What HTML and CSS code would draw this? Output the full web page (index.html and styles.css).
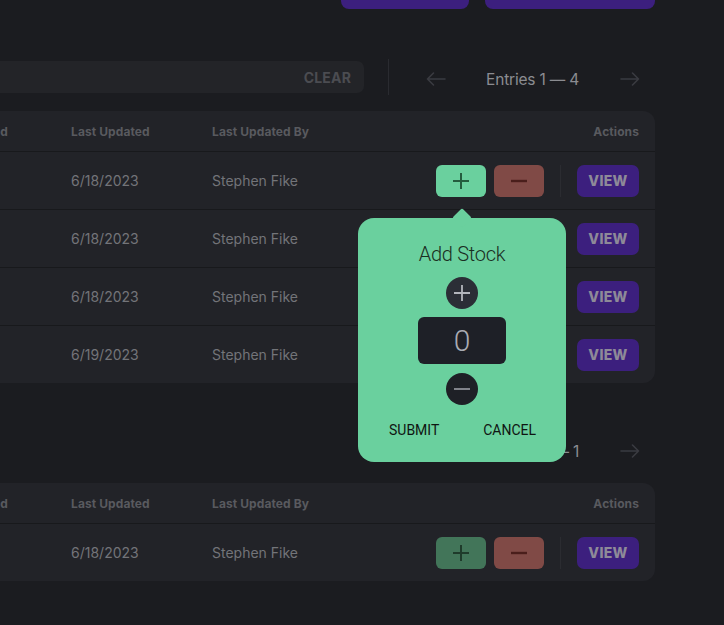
FILE: index.html
```html
<!DOCTYPE html>
<html lang="en">
<head>
<meta charset="utf-8">
<title>Inventory</title>
<link rel="stylesheet" href="styles.css">
</head>
<body>
<div class="page">
  <header class="topbar">
    <button class="btn-top btn-top-a">Import CSV</button>
    <button class="btn-top btn-top-b">Add Product</button>
  </header>

  <section class="section">
    <div class="toolbar">
      <div class="search">
        <span class="search-ph">Search by product name...</span>
        <span class="search-clear">CLEAR</span>
      </div>
      <div class="vdiv"></div>
      <div class="pager">
        <svg class="arrow" width="20" height="14" viewBox="0 0 20 14"><path d="M19 7H1.5M7.5 1L1.5 7l6 6" fill="none" stroke="currentColor" stroke-width="1.6" stroke-linecap="round" stroke-linejoin="round"/></svg>
        <span class="pager-text">Entries 1 — 4</span>
        <svg class="arrow" width="20" height="14" viewBox="0 0 20 14"><path d="M1 7h17.5M12.5 1l6 6-6 6" fill="none" stroke="currentColor" stroke-width="1.6" stroke-linecap="round" stroke-linejoin="round"/></svg>
      </div>
    </div>

    <div class="card">
      <div class="row head">
        <div>Product</div>
        <div>Date Created</div>
        <div>Last Updated</div>
        <div>Last Updated By</div>
        <div class="actions-h">Actions</div>
      </div>
      <div class="row">
        <div>Widget A</div>
        <div>6/1/2023</div>
        <div>6/18/2023</div>
        <div>Stephen Fike</div>
        <div class="actions">
          <div class="anchor">
            <button class="icon-btn add active"><svg width="18" height="18" viewBox="0 0 18 18"><path d="M9 1v16M1 9h16" stroke="currentColor" stroke-width="2"/></svg></button>
            <div class="popover">
              <div class="pop-title">Add Stock</div>
              <button class="circle circle-plus"><svg width="18" height="18" viewBox="0 0 18 18"><path d="M9 1v16M1 9h16" stroke="currentColor" stroke-width="1.8"/></svg></button>
              <div class="qty">0</div>
              <button class="circle circle-minus"><svg width="18" height="18" viewBox="0 0 18 18"><path d="M1 9h16" stroke="currentColor" stroke-width="1.8"/></svg></button>
              <div class="pop-actions">
                <span>SUBMIT</span>
                <span>CANCEL</span>
              </div>
            </div>
          </div>
          <button class="icon-btn remove"><svg width="18" height="18" viewBox="0 0 18 18"><path d="M1 9h16" stroke="currentColor" stroke-width="2.4"/></svg></button>
          <div class="adiv"></div>
          <button class="view">VIEW</button>
        </div>
      </div>
      <div class="row">
        <div>Widget B</div>
        <div>6/1/2023</div>
        <div>6/18/2023</div>
        <div>Stephen Fike</div>
        <div class="actions">
          <button class="icon-btn add"><svg width="18" height="18" viewBox="0 0 18 18"><path d="M9 1v16M1 9h16" stroke="currentColor" stroke-width="2"/></svg></button>
          <button class="icon-btn remove"><svg width="18" height="18" viewBox="0 0 18 18"><path d="M1 9h16" stroke="currentColor" stroke-width="2.4"/></svg></button>
          <div class="adiv"></div>
          <button class="view">VIEW</button>
        </div>
      </div>
      <div class="row">
        <div>Widget C</div>
        <div>6/1/2023</div>
        <div>6/18/2023</div>
        <div>Stephen Fike</div>
        <div class="actions">
          <button class="icon-btn add"><svg width="18" height="18" viewBox="0 0 18 18"><path d="M9 1v16M1 9h16" stroke="currentColor" stroke-width="2"/></svg></button>
          <button class="icon-btn remove"><svg width="18" height="18" viewBox="0 0 18 18"><path d="M1 9h16" stroke="currentColor" stroke-width="2.4"/></svg></button>
          <div class="adiv"></div>
          <button class="view">VIEW</button>
        </div>
      </div>
      <div class="row">
        <div>Widget D</div>
        <div>6/1/2023</div>
        <div>6/19/2023</div>
        <div>Stephen Fike</div>
        <div class="actions">
          <button class="icon-btn add"><svg width="18" height="18" viewBox="0 0 18 18"><path d="M9 1v16M1 9h16" stroke="currentColor" stroke-width="2"/></svg></button>
          <button class="icon-btn remove"><svg width="18" height="18" viewBox="0 0 18 18"><path d="M1 9h16" stroke="currentColor" stroke-width="2.4"/></svg></button>
          <div class="adiv"></div>
          <button class="view">VIEW</button>
        </div>
      </div>
    </div>
  </section>

  <section class="section section-2">
    <div class="toolbar toolbar-end">
      <div class="pager">
        <svg class="arrow" width="20" height="14" viewBox="0 0 20 14"><path d="M19 7H1.5M7.5 1L1.5 7l6 6" fill="none" stroke="currentColor" stroke-width="1.6" stroke-linecap="round" stroke-linejoin="round"/></svg>
        <span class="pager-text">Entries 1 — 1</span>
        <svg class="arrow" width="20" height="14" viewBox="0 0 20 14"><path d="M1 7h17.5M12.5 1l6 6-6 6" fill="none" stroke="currentColor" stroke-width="1.6" stroke-linecap="round" stroke-linejoin="round"/></svg>
      </div>
    </div>

    <div class="card">
      <div class="row head">
        <div>Product</div>
        <div>Date Created</div>
        <div>Last Updated</div>
        <div>Last Updated By</div>
        <div class="actions-h">Actions</div>
      </div>
      <div class="row">
        <div>Widget E</div>
        <div>6/1/2023</div>
        <div>6/18/2023</div>
        <div>Stephen Fike</div>
        <div class="actions">
          <button class="icon-btn add dim"><svg width="18" height="18" viewBox="0 0 18 18"><path d="M9 1v16M1 9h16" stroke="currentColor" stroke-width="2"/></svg></button>
          <button class="icon-btn remove"><svg width="18" height="18" viewBox="0 0 18 18"><path d="M1 9h16" stroke="currentColor" stroke-width="2.4"/></svg></button>
          <div class="adiv"></div>
          <button class="view">VIEW</button>
        </div>
      </div>
    </div>
  </section>
</div>
</body>
</html>
```

FILE: styles.css
```css
* { box-sizing: border-box; }

html, body {
  margin: 0;
  padding: 0;
  background: #1b1c20;
  overflow: hidden;
}

body {
  font-family: Inter, "Noto Sans", "Liberation Sans", sans-serif;
  color: #76777c;
}

button {
  font-family: inherit;
  border: 0;
  padding: 0;
  cursor: pointer;
}

.page {
  width: 900px;
  margin-left: -245px;
}

.topbar {
  display: flex;
  justify-content: flex-end;
  gap: 16px;
  margin-top: -27px;
}

.btn-top {
  height: 36px;
  border-radius: 8px;
  background: #3c1f7e;
  color: #e9e4f5;
  font-size: 14px;
  font-weight: 600;
}
.btn-top-a { width: 128px; }
.btn-top-b { width: 170px; }

.section { margin-top: 50px; }
.section-2 { margin-top: 48px; }

.toolbar {
  display: flex;
  align-items: center;
  height: 36px;
  padding-right: 15px;
}
.toolbar-end { justify-content: flex-end; }

.search {
  flex: 1;
  align-self: flex-start;
  margin-top: 2px;
  height: 32px;
  border-radius: 7px;
  background: #232428;
  display: flex;
  align-items: center;
  justify-content: space-between;
  padding: 0 13px 0 12px;
  font-size: 14px;
}
.search-ph { color: #6b6c71; }
.search-clear {
  color: #4b4c51;
  font-weight: 700;
  font-size: 14px;
  letter-spacing: 0.2px;
}

.vdiv {
  width: 1px;
  height: 36px;
  background: #2a2b30;
  margin-left: 24px;
  margin-right: 37px;
}

.pager {
  display: flex;
  align-items: center;
  margin-top: 4px;
}
.arrow { color: #3a3b41; display: block; }
.pager-text {
  color: #8b8c91;
  font-size: 15.5px;
  margin: 0 41px 0 40px;
  letter-spacing: -0.2px;
}

.card {
  margin-top: 16px;
  background: #222328;
  border-radius: 12px;
}

.row {
  display: grid;
  grid-template-columns: 159px 141px 141px 1fr auto;
  align-items: center;
  height: 58px;
  padding: 0 16px;
  font-size: 14px;
  color: #737479;
  border-top: 1px solid #18191c;
}
.row.head {
  height: 40px;
  border-top: 0;
  font-size: 12px;
  font-weight: 700;
  color: #595a5f;
  letter-spacing: 0.1px;
}

.actions-h { text-align: right; }

.actions {
  display: flex;
  align-items: center;
  gap: 8px;
}

.anchor { position: relative; }

.icon-btn {
  width: 50px;
  height: 32px;
  border-radius: 6px;
  display: flex;
  align-items: center;
  justify-content: center;
}
.icon-btn svg { display: block; }
.add { background: #427559; color: #1f3b2b; }
.add.active { background: #6ad09e; color: #245c3e; }
.remove { background: #804a46; color: #4a1e1b; }

.adiv {
  width: 1px;
  height: 32px;
  background: #2b2c31;
  margin: 0 8px;
}

.view {
  width: 62px;
  height: 32px;
  border-radius: 7px;
  background: #3c1f7e;
  color: #8e8a98;
  font-weight: 800;
  font-size: 14px;
  letter-spacing: 0.3px;
}

.popover {
  position: absolute;
  top: 53px;
  left: 50%;
  margin-left: -103px;
  width: 208px;
  height: 244px;
  background: #6ad09e;
  border-radius: 16px;
  display: flex;
  flex-direction: column;
  align-items: center;
  padding-top: 25px;
  z-index: 5;
}
.popover::before {
  content: "";
  position: absolute;
  top: -7px;
  left: 50%;
  width: 14px;
  height: 14px;
  margin-left: -7px;
  background: #6ad09e;
  transform: rotate(45deg);
  border-radius: 2px;
}

.pop-title {
  font-family: Roboto, Inter, sans-serif;
  font-weight: 300;
  font-size: 20px;
  color: #1a2e22;
  letter-spacing: -0.3px;
  line-height: 22px;
}

.circle {
  width: 32px;
  height: 32px;
  border-radius: 50%;
  display: flex;
  align-items: center;
  justify-content: center;
}
.circle svg { display: block; }
.circle-plus {
  margin-top: 12px;
  background: #2b2e36;
  color: #b3b5bc;
}
.circle-minus {
  margin-top: 9px;
  background: #1e2026;
  color: #8d8f97;
}

.qty {
  margin-top: 8px;
  width: 88px;
  height: 47px;
  border-radius: 6px;
  background: #1e2027;
  color: #a9abb3;
  font-family: Roboto, Inter, sans-serif;
  font-weight: 300;
  font-size: 30px;
  display: flex;
  align-items: center;
  justify-content: center;
}

.pop-actions {
  margin-top: 17px;
  width: 100%;
  display: flex;
  justify-content: space-between;
  padding: 0 30px 0 31px;
  font-family: Roboto, Inter, sans-serif;
  font-size: 14px;
  color: #101512;
}
```
